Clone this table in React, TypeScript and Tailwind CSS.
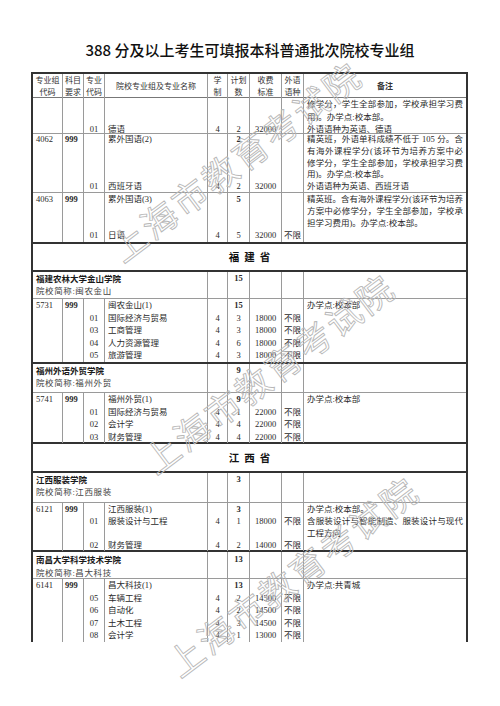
import React from "react";

type L = React.ReactNode;

const B = (s: string) => <span className="font-bold">{s}</span>;

const serif = "font-['Liberation_Serif','Noto_Sans_CJK_SC',serif]";
const sans = "font-['Noto_Sans_CJK_SC',sans-serif]";

const cellCls = [
  "border-r border-[#9a9a9a] pl-[3px]",
  "border-r border-[#9a9a9a] pl-[2px] font-bold",
  "border-r border-[#9a9a9a] text-center",
  "border-r border-[#9a9a9a] pl-[3px]",
  "border-r border-[#9a9a9a] text-center",
  "border-r border-[#9a9a9a] text-center",
  "border-r border-[#9a9a9a] text-center",
  "border-r border-[#9a9a9a] text-center",
  "px-[3px]",
];

function Line({ l, remark }: { l: L; remark?: boolean }) {
  if (l === "" || l === undefined) return <div>{"\u00a0"}</div>;
  if (remark && typeof l === "string" && l.length >= 17) {
    return <div className="text-justify [text-align-last:justify]">{l}</div>;
  }
  return <div className="whitespace-nowrap">{l}</div>;
}

function GroupRow({
  h,
  lead,
  border,
  cols,
}: {
  h: string;
  lead: string;
  border: string;
  cols: L[][];
}) {
  return (
    <div
      className={`grid grid-cols-[30px_21px_21px_103px_20px_22px_32px_22px_162px] ${h} ${lead} ${border}`}
    >
      {cols.map((lines, i) => (
        <div key={i} className={cellCls[i]}>
          {lines.map((l, j) => (
            <Line key={j} l={l} remark={i === 8} />
          ))}
        </div>
      ))}
    </div>
  );
}

function CollegeRow({
  h,
  lead,
  border,
  name,
  abbr,
  plan,
}: {
  h: string;
  lead: string;
  border: string;
  name: string;
  abbr: string;
  plan: string;
}) {
  return (
    <div
      className={`grid grid-cols-[175px_20px_22px_32px_22px_162px] ${h} ${lead} ${border}`}
    >
      <div className="border-r border-[#9a9a9a] pl-[3px]">
        <div className={`${sans} font-bold text-[8.5px] text-[#1a1a1a]`}>{name}</div>
        <div className="tracking-[0.6px] text-[#444]">{abbr}</div>
      </div>
      <div className="border-r border-[#9a9a9a]" />
      <div className="border-r border-[#9a9a9a] text-center font-bold">{plan}</div>
      <div className="border-r border-[#9a9a9a]" />
      <div className="border-r border-[#9a9a9a]" />
      <div />
    </div>
  );
}

function Province({ h, text }: { h: string; text: string }) {
  return (
    <div
      className={`${h} border-b-2 border-[#333] flex items-center justify-center pl-[5px] ${sans} font-bold text-[10.5px] tracking-[5px] text-[#111]`}
    >
      {text}
    </div>
  );
}

function Header() {
  const cols: L[][] = [
    ["专业组", "代码"],
    ["科目", "要求"],
    ["专业", "代码"],
    ["院校专业组及专业名称"],
    ["学", "制"],
    ["计划", "数"],
    ["收费", "标准"],
    ["外语", "语种"],
    [B("备注")],
  ];
  return (
    <div
      className={`grid grid-cols-[30px_21px_21px_103px_20px_22px_32px_22px_162px] h-[24px] leading-[12px] border-b border-[#777] ${sans} text-[8px] text-[#333]`}
    >
      {cols.map((lines, i) => (
        <div
          key={i}
          className={`flex flex-col items-center justify-center ${
            i < 8 ? "border-r border-[#9a9a9a]" : ""
          }`}
        >
          {lines.map((l, j) => (
            <div key={j} className="whitespace-nowrap">
              {l}
            </div>
          ))}
        </div>
      ))}
    </div>
  );
}

function Watermark({ pos }: { pos: string }) {
  return (
    <div
      className={`pointer-events-none absolute ${pos} -translate-x-1/2 -translate-y-1/2 rotate-[-37deg] whitespace-nowrap text-[35px] leading-none tracking-[3px] text-transparent [-webkit-text-stroke:0.9px_#b8b8b8] ${sans}`}
    >
      上海市教育考试院
    </div>
  );
}

export default function App() {
  const thin = "border-b border-[#9a9a9a]";
  const thick = "border-b-2 border-[#333]";
  return (
    <div className="relative w-[500px] h-[706px] overflow-hidden bg-white text-[#2a2a2a]">
      <div
        className={`pt-[40px] text-center text-[15px] leading-[20px] font-medium ${sans} text-[#111]`}
      >
        388 分及以上考生可填报本科普通批次院校专业组
      </div>
      <div
        className={`ml-[31px] mt-[12px] w-[437px] border-l-2 border-r-2 border-t-2 border-[#333] ${serif} text-[8.5px]`}
      >
        <Header />
        <GroupRow
          h="h-[36px]"
          lead="leading-[12.5px]"
          border={thin}
          cols={[
            ["", "", ""],
            ["", "", ""],
            ["", "", "01"],
            ["", "", "德语"],
            ["", "", "4"],
            ["", "", "2"],
            ["", "", "32000"],
            ["", "", ""],
            [
              "修学分，学生全部参加，学校承担学习费",
              "用)。办学点:校本部。",
              "外语语种为英语、德语",
            ],
          ]}
        />
        <GroupRow
          h="h-[59px]"
          lead="leading-[11.8px]"
          border={thin}
          cols={[
            ["4062"],
            ["999"],
            ["", "", "", "", "01"],
            ["累外国语(2)", "", "", "", "西班牙语"],
            ["", "", "", "", "4"],
            [B("2"), "", "", "", "2"],
            ["", "", "", "", "32000"],
            [""],
            [
              "精英班，外语单科成绩不低于 105 分。含",
              "有海外课程学分(该环节为培养方案中必",
              "修学分，学生全部参加，学校承担学习费",
              "用)。办学点:校本部。",
              "外语语种为英语、西班牙语",
            ],
          ]}
        />
        <GroupRow
          h="h-[51px]"
          lead="leading-[12px]"
          border={thick}
          cols={[
            ["4063"],
            ["999"],
            ["", "", "", "01"],
            ["累外国语(3)", "", "", "日语"],
            ["", "", "", "4"],
            [B("5"), "", "", "5"],
            ["", "", "", "32000"],
            ["", "", "", "不限"],
            [
              "精英班。含有海外课程学分(该环节为培养",
              "方案中必修学分，学生全部参加，学校承",
              "担学习费用)。办学点:校本部。",
            ],
          ]}
        />
        <Province h="h-[28px]" text="福建省" />
        <CollegeRow
          h="h-[27px]"
          lead="leading-[13px]"
          border={thin}
          name="福建农林大学金山学院"
          abbr="院校简称:闽农金山"
          plan="15"
        />
        <GroupRow
          h="h-[65px]"
          lead="leading-[12.5px]"
          border={thick}
          cols={[
            ["5731"],
            ["999"],
            ["", "01", "03", "04", "05"],
            ["闽农金山(1)", "国际经济与贸易", "工商管理", "人力资源管理", "旅游管理"],
            ["", "4", "4", "4", "4"],
            [B("15"), "3", "3", "6", "3"],
            ["", "18000", "18000", "18000", "18000"],
            ["", "不限", "不限", "不限", "不限"],
            ["办学点:校本部"],
          ]}
        />
        <CollegeRow
          h="h-[29px]"
          lead="leading-[12.5px]"
          border={thin}
          name="福州外语外贸学院"
          abbr="院校简称:福州外贸"
          plan="9"
        />
        <GroupRow
          h="h-[51px]"
          lead="leading-[12.5px]"
          border={thick}
          cols={[
            ["5741"],
            ["999"],
            ["", "01", "02", "03"],
            ["福州外贸(1)", "国际经济与贸易", "会计学", "财务管理"],
            ["", "4", "4", "4"],
            [B("9"), "1", "4", "4"],
            ["", "22000", "22000", "22000"],
            ["", "不限", "不限", "不限"],
            ["办学点:校本部"],
          ]}
        />
        <Province h="h-[29px]" text="江西省" />
        <CollegeRow
          h="h-[30px]"
          lead="leading-[13px]"
          border={thin}
          name="江西服装学院"
          abbr="院校简称:江西服装"
          plan="3"
        />
        <GroupRow
          h="h-[49px]"
          lead="leading-[12px]"
          border={thick}
          cols={[
            ["6121"],
            ["999"],
            ["", "01", "", "02"],
            ["江西服装(1)", "服装设计与工程", "", "财务管理"],
            ["", "4", "", "4"],
            [B("3"), "1", "", "2"],
            ["", "18000", "", "14000"],
            ["", "不限", "", "不限"],
            ["办学点:校本部。", "含服装设计与智能制造、服装设计与现代", "工程方向"],
          ]}
        />
        <CollegeRow
          h="h-[27px]"
          lead="leading-[14px]"
          border={thin}
          name="南昌大学科学技术学院"
          abbr="院校简称:昌大科技"
          plan="13"
        />
        <GroupRow
          h="h-[63px]"
          lead="leading-[12.5px]"
          border=""
          cols={[
            ["6141"],
            ["999"],
            ["", "05", "06", "07", "08"],
            ["昌大科技(1)", "车辆工程", "自动化", "土木工程", "会计学"],
            ["", "4", "4", "4", "4"],
            [B("13"), "2", "2", "3", "1"],
            ["", "14500", "14500", "14500", "13000"],
            ["", "不限", "不限", "不限", "不限"],
            ["办学点:共青城"],
          ]}
        />
      </div>
      <Watermark pos="left-[235px] top-[160px]" />
      <Watermark pos="left-[268px] top-[372px]" />
      <Watermark pos="left-[292px] top-[575px]" />
    </div>
  );
}
